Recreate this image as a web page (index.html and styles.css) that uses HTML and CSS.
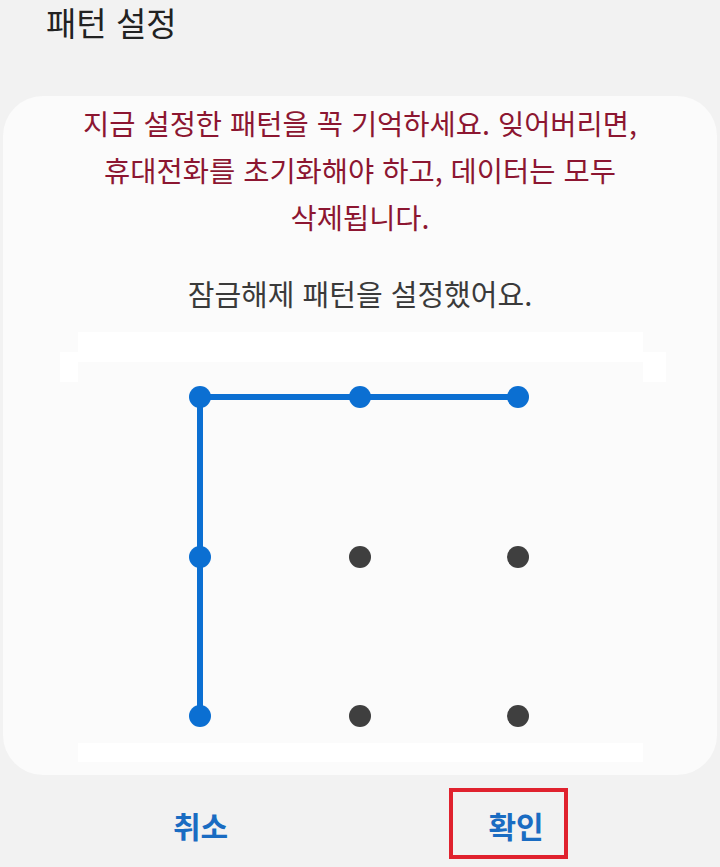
FILE: index.html
```html
<!DOCTYPE html>
<html lang="ko">
<head>
<meta charset="utf-8">
<title>패턴 설정</title>
<link rel="stylesheet" href="styles.css">
</head>
<body>
<header class="header">
  <h1 class="title">패턴 설정</h1>
</header>
<main class="card">
  <p class="warning">지금 설정한 패턴을 꼭 기억하세요. 잊어버리면,<br>휴대전화를 초기화해야 하고, 데이터는 모두<br>삭제됩니다.</p>
  <p class="status">잠금해제 패턴을 설정했어요.</p>
  <div class="strip-row">
    <div class="strip-side"></div>
    <div class="strip-main"></div>
    <div class="strip-side strip-side-right"></div>
  </div>
  <svg class="pattern" viewBox="3 382 714 361" width="714" height="361" aria-label="패턴">
    <polyline points="518,397 200,397 200,716" fill="none" stroke="#0b6fd2" stroke-width="6" stroke-linejoin="round"/>
    <circle cx="200" cy="397" r="11" fill="#0b6fd2"/>
    <circle cx="360" cy="397" r="11" fill="#0b6fd2"/>
    <circle cx="518" cy="397" r="11" fill="#0b6fd2"/>
    <circle cx="200" cy="557" r="11" fill="#0b6fd2"/>
    <circle cx="200" cy="716" r="11" fill="#0b6fd2"/>
    <circle cx="360" cy="557" r="11" fill="#3f3f3f"/>
    <circle cx="518" cy="557" r="11" fill="#3f3f3f"/>
    <circle cx="360" cy="716" r="11" fill="#3f3f3f"/>
    <circle cx="518" cy="716" r="11" fill="#3f3f3f"/>
  </svg>
  <div class="strip-bottom"></div>
</main>
<nav class="actions">
  <div class="action"><span class="btn">취소</span></div>
  <div class="action"><span class="btn btn-ok">확인</span></div>
</nav>
</body>
</html>
```

FILE: styles.css
```css
* { box-sizing: border-box; }

html, body {
  margin: 0;
  padding: 0;
}

body {
  width: 720px;
  height: 867px;
  overflow: hidden;
  background: #f2f2f2;
  font-family: "Noto Sans CJK KR", "Noto Sans", sans-serif;
}

.header {
  height: 96px;
  padding-left: 46px;
  padding-top: 2px;
}

.title {
  margin: 0;
  font-size: 33px;
  line-height: 40px;
  font-weight: 400;
  color: #222222;
}

.card {
  margin: 0 3px;
  height: 679px;
  background: #fbfbfb;
  border-radius: 40px;
  padding-top: 3px;
  display: flex;
  flex-direction: column;
}

.warning {
  margin: 0;
  text-align: center;
  font-size: 28.5px;
  line-height: 47px;
  color: #8c1631;
}

.status {
  margin: 30px 0 0;
  text-align: center;
  font-size: 29px;
  line-height: 46px;
  color: #3a3a3a;
}

.strip-row {
  margin-top: 16px;
  margin-left: 57px;
  display: flex;
  align-items: flex-start;
  height: 50px;
  flex: none;
}

.strip-main {
  width: 565px;
  height: 30px;
  background: #ffffff;
}

.strip-side {
  width: 18px;
  height: 30px;
  margin-top: 20px;
  background: #ffffff;
}

.strip-side-right {
  width: 23px;
}

.pattern {
  display: block;
  flex: none;
}

.strip-bottom {
  margin-left: 75px;
  width: 565px;
  height: 19px;
  flex: none;
  background: #ffffff;
}

.actions {
  display: grid;
  grid-template-columns: 315px 315px;
  padding-left: 43px;
  padding-top: 13px;
}

.action {
  display: flex;
  justify-content: center;
}

.btn {
  font-size: 30px;
  font-weight: 700;
  line-height: 75px;
  color: #1a6cc2;
  height: 71px;
}

.btn-ok {
  width: 119px;
  border: 4px solid #e0222e;
  line-height: 67px;
  padding-left: 36px;
  margin-left: -15px;
}
```
